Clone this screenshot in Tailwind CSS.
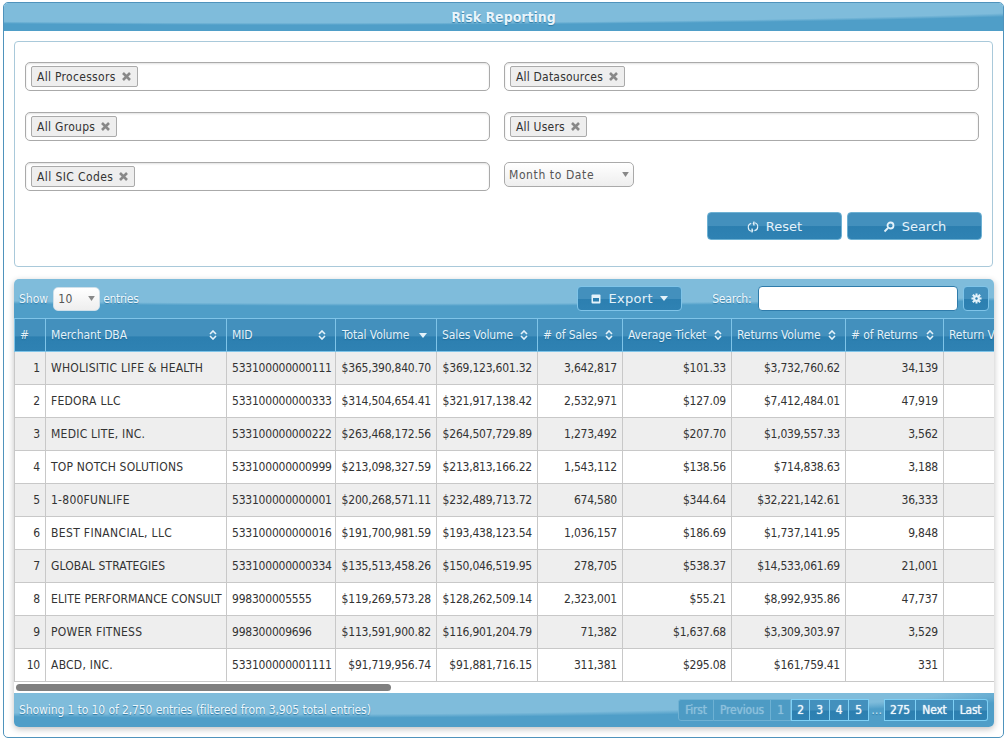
<!DOCTYPE html>
<html>
<head>
<meta charset="utf-8">
<script src="https://cdn.jsdelivr.net/npm/@tailwindcss/browser@4"></script>
</head>
<body class="bg-white font-['DejaVu_Sans',sans-serif] text-[12px] text-[#333] [font-stretch:condensed] overflow-hidden">
<div class="w-[1007px] h-[741px] px-[3px] pt-[2px] overflow-hidden">
  <div class="w-[1001px] h-[736px] border border-[#4f93bc] rounded-[5px] flex flex-col overflow-hidden">
    <div class="h-[28px] shrink-0 bg-[radial-gradient(ellipse_900px_22px_at_30%_0%,#7fbcdb_0%,#7fbcdb_90%,#4f9ec8_100%)] flex items-center justify-center text-[14px] font-bold text-[#e8f4fb] [text-shadow:0_1px_1px_#2d7aa5]">Risk Reporting</div>
    <div class="flex-1 flex flex-col px-[10px] pt-[10px]">
      <div class="h-[226px] shrink-0 border border-[#a9c9da] rounded-[4px] relative px-[10px] pt-[20px]">
        <div class="grid grid-cols-[465px_475px] gap-x-[14px] gap-y-[21px] tracking-[.3px]">
          <div class="h-[29px] border border-[#aaa] rounded-[5px] bg-white shadow-[inset_0_1px_2px_rgba(0,0,0,.12)] flex items-center pl-[5px]"><span class="h-[21px] border border-[#aaa] rounded-[2px] bg-[#eee] px-[5px] flex items-center gap-[5px]">All Processors<svg class="w-[11px] h-[11px]" viewBox="0 0 11 11"><path d="M2 2l7 7M9 2l-7 7" stroke="#888" stroke-width="2.6"/></svg></span></div>
          <div class="h-[29px] border border-[#aaa] rounded-[5px] bg-white shadow-[inset_0_1px_2px_rgba(0,0,0,.12)] flex items-center pl-[5px]"><span class="h-[21px] border border-[#aaa] rounded-[2px] bg-[#eee] px-[5px] flex items-center gap-[5px] tracking-[.2px]">All Datasources<svg class="w-[11px] h-[11px]" viewBox="0 0 11 11"><path d="M2 2l7 7M9 2l-7 7" stroke="#888" stroke-width="2.6"/></svg></span></div>
          <div class="h-[29px] border border-[#aaa] rounded-[5px] bg-white shadow-[inset_0_1px_2px_rgba(0,0,0,.12)] flex items-center pl-[5px]"><span class="h-[21px] border border-[#aaa] rounded-[2px] bg-[#eee] px-[5px] flex items-center gap-[5px]">All Groups<svg class="w-[11px] h-[11px]" viewBox="0 0 11 11"><path d="M2 2l7 7M9 2l-7 7" stroke="#888" stroke-width="2.6"/></svg></span></div>
          <div class="h-[29px] border border-[#aaa] rounded-[5px] bg-white shadow-[inset_0_1px_2px_rgba(0,0,0,.12)] flex items-center pl-[5px]"><span class="h-[21px] border border-[#aaa] rounded-[2px] bg-[#eee] px-[5px] flex items-center gap-[5px] tracking-[.2px]">All Users<svg class="w-[11px] h-[11px]" viewBox="0 0 11 11"><path d="M2 2l7 7M9 2l-7 7" stroke="#888" stroke-width="2.6"/></svg></span></div>
          <div class="h-[29px] border border-[#aaa] rounded-[5px] bg-white shadow-[inset_0_1px_2px_rgba(0,0,0,.12)] flex items-center pl-[5px]"><span class="h-[21px] border border-[#aaa] rounded-[2px] bg-[#eee] px-[5px] flex items-center gap-[5px] tracking-[.4px]">All SIC Codes<svg class="w-[11px] h-[11px]" viewBox="0 0 11 11"><path d="M2 2l7 7M9 2l-7 7" stroke="#888" stroke-width="2.6"/></svg></span></div>
          <div class="h-[25px] w-[130px] border border-[#aaa] rounded-[5px] bg-[linear-gradient(#fff,#eee)] flex items-center justify-between px-[4px] text-[#555] tracking-[.6px]">Month to Date<svg class="w-[7px] h-[5px]" viewBox="0 0 8 6"><path d="M0 0h8L4 6z" fill="#888"/></svg></div>
        </div>
        <div class="absolute right-[10px] top-[170px] flex gap-[5px]">
          <div class="w-[135px] h-[28px] pt-[1px] rounded-[4px] border border-[#6eb1d3] bg-[linear-gradient(#4390bd_0%,#4390bd_50%,#2c7fb0_52%,#2f82b3_100%)] flex items-center justify-center gap-[7px] text-[#e4f2fa] text-[13px] [font-stretch:normal]"><svg class="w-[12px] h-[12px]" viewBox="0 0 12 12" fill="none" stroke="#e4f2fa" stroke-width="1.1"><path d="M4.2 2.4A4 4 0 0 0 4.6 10.2M7.8 1.8A4 4 0 0 1 7.4 9.6"/><path d="M7 0.5v4l-1.4-2zM5 11.5v-4l1.4 2z" fill="#e4f2fa" stroke="none"/><path d="M7 0.5v4M5 11.5v-4"/></svg>Reset</div>
          <div class="w-[135px] h-[28px] pt-[1px] rounded-[4px] border border-[#6eb1d3] bg-[linear-gradient(#4390bd_0%,#4390bd_50%,#2c7fb0_52%,#2f82b3_100%)] flex items-center justify-center gap-[7px] text-[#e4f2fa] text-[13px] [font-stretch:normal]"><svg class="w-[12px] h-[12px]" viewBox="0 0 12 12" fill="none" stroke="#e4f2fa" stroke-width="1.8"><circle cx="7.5" cy="4.5" r="3"/><path d="M5 7l-3.5 3.5"/></svg>Search</div>
        </div>
      </div>
      <div class="mt-[12px] w-[980px] h-[448px] flex flex-col rounded-[5px] shadow-[0_2px_6px_rgba(0,0,0,.25)] overflow-hidden">
        <div class="h-[39px] shrink-0 bg-[radial-gradient(ellipse_1000px_27px_at_40%_0%,#7fbcdb_0%,#7fbcdb_90%,#4f9ec8_100%)] flex items-center pl-[5px] text-[#eef7fc] [text-shadow:0_1px_1px_#2d7aa5]">
          <span>Show</span>
          <div class="ml-[5px] w-[47px] h-[24px] rounded-[5px] bg-[linear-gradient(#fff,#eee)] border border-[#cfe0ea] flex items-center justify-between pl-[4px] pr-[4px] text-[#555] tracking-[.5px] [text-shadow:none]">10<svg class="w-[7px] h-[5px]" viewBox="0 0 8 6"><path d="M0 0h8L4 6z" fill="#888"/></svg></div>
          <span class="ml-[3px] w-[37px] tracking-[-0.3px]">entries</span>
          <div class="ml-[437px] w-[105px] h-[25px] rounded-[4px] border border-[#7fc4e8] bg-[linear-gradient(#4390bd_0%,#4390bd_50%,#2c7fb0_52%,#2f82b3_100%)] flex items-center justify-center gap-[7px] text-[#e4f2fa] text-[13px] tracking-[.3px] [font-stretch:normal] [text-shadow:none]"><svg class="w-[10px] h-[10px]" viewBox="0 0 10 10"><rect x="0.5" y="0.5" width="9" height="9" rx="1" fill="#e4f2fa"/><rect x="2" y="4" width="6" height="3.5" fill="#2c7fb0"/></svg>Export<svg class="w-[8px] h-[5px]" viewBox="0 0 8 5"><path d="M0 0h8L4 5z" fill="#e4f2fa"/></svg></div>
          <span class="ml-[30px] w-[40px] whitespace-nowrap tracking-[-0.2px]">Search:</span>
          <div class="ml-[6px] w-[200px] h-[25px] rounded-[4px] bg-white border border-[#2f7cab]"></div>
          <div class="ml-[5px] w-[26px] h-[25px] rounded-[4px] border border-[#7fc4e8] bg-[linear-gradient(#4390bd_0%,#4390bd_50%,#2c7fb0_52%,#2f82b3_100%)] flex items-center justify-center"><svg class="w-[11px] h-[11px]" viewBox="0 0 12 12"><path d="M6 0.5v11M0.5 6h11M2 2l8 8M10 2l-8 8" stroke="#e4f2fa" stroke-width="2.2"/><circle cx="6" cy="6" r="3.4" fill="#e4f2fa"/><circle cx="6" cy="6" r="1.3" fill="#2c7fb0"/></svg></div>
        </div>
        <div class="h-[375px] shrink-0 overflow-hidden bg-white relative">
          <table class="border-collapse table-fixed w-[1060px] text-[#333]">
            <colgroup><col class="w-[31px]"><col class="w-[181px]"><col class="w-[109px]"><col class="w-[101px]"><col class="w-[101px]"><col class="w-[85px]"><col class="w-[109px]"><col class="w-[114px]"><col class="w-[98px]"><col class="w-[131px]"></colgroup>
            <thead>
              <tr class="h-[33px] bg-[linear-gradient(#4390bd_0%,#4390bd_50%,#2c7fb0_55%,#2f82b3_100%)] text-[#e4f2fa] text-left tracking-[-0.1px] [text-shadow:0_1px_1px_#1f6a96] [&_th]:border [&_th]:border-[#7fc4e8] [&_th]:font-normal [&_th]:pl-[5px] [&_th]:pr-[9px] [&_svg]:shrink-0">
                <th>#</th>
                <th><div class="flex items-center justify-between">Merchant DBA<svg class="w-[8px] h-[10px]" viewBox="0 0 8 10" fill="none" stroke="#e4f2fa" stroke-width="1.6"><path d="M1 4l3-3 3 3M1 6l3 3 3-3"/></svg></div></th>
                <th><div class="flex items-center justify-between">MID<svg class="w-[8px] h-[10px]" viewBox="0 0 8 10" fill="none" stroke="#e4f2fa" stroke-width="1.6"><path d="M1 4l3-3 3 3M1 6l3 3 3-3"/></svg></div></th>
                <th><div class="flex items-center justify-between pl-[1px]">Total Volume<svg class="w-[8px] h-[5px]" viewBox="0 0 8 5"><path d="M0 0h8L4 5z" fill="#e4f2fa"/></svg></div></th>
                <th><div class="flex items-center justify-between">Sales Volume<svg class="w-[8px] h-[10px]" viewBox="0 0 8 10" fill="none" stroke="#e4f2fa" stroke-width="1.6"><path d="M1 4l3-3 3 3M1 6l3 3 3-3"/></svg></div></th>
                <th><div class="flex items-center justify-between"># of Sales<svg class="w-[8px] h-[10px]" viewBox="0 0 8 10" fill="none" stroke="#e4f2fa" stroke-width="1.6"><path d="M1 4l3-3 3 3M1 6l3 3 3-3"/></svg></div></th>
                <th><div class="flex items-center justify-between whitespace-nowrap">Average Ticket<svg class="w-[8px] h-[10px]" viewBox="0 0 8 10" fill="none" stroke="#e4f2fa" stroke-width="1.6"><path d="M1 4l3-3 3 3M1 6l3 3 3-3"/></svg></div></th>
                <th><div class="flex items-center justify-between whitespace-nowrap">Returns Volume<svg class="w-[8px] h-[10px]" viewBox="0 0 8 10" fill="none" stroke="#e4f2fa" stroke-width="1.6"><path d="M1 4l3-3 3 3M1 6l3 3 3-3"/></svg></div></th>
                <th><div class="flex items-center justify-between whitespace-nowrap"># of Returns<svg class="w-[8px] h-[10px]" viewBox="0 0 8 10" fill="none" stroke="#e4f2fa" stroke-width="1.6"><path d="M1 4l3-3 3 3M1 6l3 3 3-3"/></svg></div></th>
                <th class="whitespace-nowrap overflow-hidden">Return Volume</th>
              </tr>
            </thead>
            <tbody class="tracking-[-0.22px] [&_td]:border [&_td]:border-[#c8c8c8] [&_td]:px-[5px] [&_td]:text-right [&_tr]:h-[33px] [&_tr:nth-child(odd)]:bg-[#eee]">
              <tr><td>1</td><td class="!text-left whitespace-nowrap tracking-[.25px]">WHOLISITIC LIFE &amp; HEALTH</td><td class="!text-left">533100000000111</td><td>$365,390,840.70</td><td>$369,123,601.32</td><td>3,642,817</td><td>$101.33</td><td>$3,732,760.62</td><td>34,139</td><td></td></tr>
              <tr><td>2</td><td class="!text-left whitespace-nowrap tracking-[.25px]">FEDORA LLC</td><td class="!text-left">533100000000333</td><td>$314,504,654.41</td><td>$321,917,138.42</td><td>2,532,971</td><td>$127.09</td><td>$7,412,484.01</td><td>47,919</td><td></td></tr>
              <tr><td>3</td><td class="!text-left whitespace-nowrap tracking-[.25px]">MEDIC LITE, INC.</td><td class="!text-left">533100000000222</td><td>$263,468,172.56</td><td>$264,507,729.89</td><td>1,273,492</td><td>$207.70</td><td>$1,039,557.33</td><td>3,562</td><td></td></tr>
              <tr><td>4</td><td class="!text-left whitespace-nowrap tracking-[.2px]">TOP NOTCH SOLUTIONS</td><td class="!text-left">533100000000999</td><td>$213,098,327.59</td><td>$213,813,166.22</td><td>1,543,112</td><td>$138.56</td><td>$714,838.63</td><td>3,188</td><td></td></tr>
              <tr><td>5</td><td class="!text-left whitespace-nowrap tracking-[.25px]">1-800FUNLIFE</td><td class="!text-left">533100000000001</td><td>$200,268,571.11</td><td>$232,489,713.72</td><td>674,580</td><td>$344.64</td><td>$32,221,142.61</td><td>36,333</td><td></td></tr>
              <tr><td>6</td><td class="!text-left whitespace-nowrap tracking-[.35px]">BEST FINANCIAL, LLC</td><td class="!text-left">533100000000016</td><td>$191,700,981.59</td><td>$193,438,123.54</td><td>1,036,157</td><td>$186.69</td><td>$1,737,141.95</td><td>9,848</td><td></td></tr>
              <tr><td>7</td><td class="!text-left whitespace-nowrap tracking-[.12px]">GLOBAL STRATEGIES</td><td class="!text-left">533100000000334</td><td>$135,513,458.26</td><td>$150,046,519.95</td><td>278,705</td><td>$538.37</td><td>$14,533,061.69</td><td>21,001</td><td></td></tr>
              <tr><td>8</td><td class="!text-left whitespace-nowrap tracking-[.1px]">ELITE PERFORMANCE CONSULT</td><td class="!text-left">998300005555</td><td>$119,269,573.28</td><td>$128,262,509.14</td><td>2,323,001</td><td>$55.21</td><td>$8,992,935.86</td><td>47,737</td><td></td></tr>
              <tr><td>9</td><td class="!text-left whitespace-nowrap tracking-[.25px]">POWER FITNESS</td><td class="!text-left">998300009696</td><td>$113,591,900.82</td><td>$116,901,204.79</td><td>71,382</td><td>$1,637.68</td><td>$3,309,303.97</td><td>3,529</td><td></td></tr>
              <tr><td>10</td><td class="!text-left whitespace-nowrap tracking-[.25px]">ABCD, INC.</td><td class="!text-left">533100000001111</td><td>$91,719,956.74</td><td>$91,881,716.15</td><td>311,381</td><td>$295.08</td><td>$161,759.41</td><td>331</td><td></td></tr>
            </tbody>
          </table>
          <div class="absolute left-[2px] bottom-[2px] w-[375px] h-[7px] rounded-[4px] bg-[#808080]"></div>
        </div>
        <div class="h-[34px] shrink-0 bg-[radial-gradient(ellipse_800px_25px_at_25%_0%,#7fbcdb_0%,#7fbcdb_85%,#4f9ec8_100%)] flex items-center justify-between pl-[5px] pr-[6px] text-[#eef7fc] [text-shadow:0_1px_1px_#2d7aa5]">
          <span class="tracking-[-0.1px]">Showing 1 to 10 of 2,750 entries (filtered from 3,905 total entries)</span>
          <div class="flex items-center h-[22px] tracking-[-0.2px]">
            <span class="w-[36px] h-full flex items-center justify-center border border-[#6eb1d3] rounded-l-[3px] text-[#8cc0dc] [text-shadow:0_0_1px_#8cc0dc] bg-[#4d9bc4]">First</span>
            <span class="w-[57px] h-full flex items-center justify-center border border-l-0 border-[#6eb1d3] text-[#8cc0dc] [text-shadow:0_0_1px_#8cc0dc] bg-[#4d9bc4]">Previous</span>
            <span class="w-[20px] h-full flex items-center justify-center border border-l-0 border-[#6eb1d3] text-[#8cc0dc] [text-shadow:0_0_1px_#8cc0dc] bg-[#4d9bc4]">1</span>
            <span class="w-[19px] h-full flex items-center justify-center border border-[#7fd0f5] text-[#eef7fc] [text-shadow:0_0_1px_#eef7fc] bg-[linear-gradient(#4390bd_0%,#4390bd_50%,#2c7fb0_55%,#2f82b3_100%)]">2</span>
            <span class="w-[20px] h-full flex items-center justify-center border border-l-0 border-[#7fd0f5] text-[#eef7fc] [text-shadow:0_0_1px_#eef7fc] bg-[linear-gradient(#4390bd_0%,#4390bd_50%,#2c7fb0_55%,#2f82b3_100%)]">3</span>
            <span class="w-[19px] h-full flex items-center justify-center border border-l-0 border-[#7fd0f5] text-[#eef7fc] [text-shadow:0_0_1px_#eef7fc] bg-[linear-gradient(#4390bd_0%,#4390bd_50%,#2c7fb0_55%,#2f82b3_100%)]">4</span>
            <span class="w-[20px] h-full flex items-center justify-center border border-l-0 border-[#7fd0f5] text-[#eef7fc] [text-shadow:0_0_1px_#eef7fc] bg-[linear-gradient(#4390bd_0%,#4390bd_50%,#2c7fb0_55%,#2f82b3_100%)]">5</span>
            <span class="w-[15px] text-center text-[#cfe6f3]">…</span>
            <span class="w-[32px] h-full flex items-center justify-center border border-[#7fd0f5] text-[#eef7fc] [text-shadow:0_0_1px_#eef7fc] bg-[linear-gradient(#4390bd_0%,#4390bd_50%,#2c7fb0_55%,#2f82b3_100%)]">275</span>
            <span class="w-[38px] h-full flex items-center justify-center border border-l-0 border-[#7fd0f5] text-[#eef7fc] [text-shadow:0_0_1px_#eef7fc] bg-[linear-gradient(#4390bd_0%,#4390bd_50%,#2c7fb0_55%,#2f82b3_100%)]">Next</span>
            <span class="w-[34px] h-full flex items-center justify-center border border-l-0 border-[#7fd0f5] rounded-r-[3px] text-[#eef7fc] [text-shadow:0_0_1px_#eef7fc] bg-[linear-gradient(#4390bd_0%,#4390bd_50%,#2c7fb0_55%,#2f82b3_100%)]">Last</span>
          </div>
        </div>
      </div>
    </div>
  </div>
</div>
</body>
</html>
